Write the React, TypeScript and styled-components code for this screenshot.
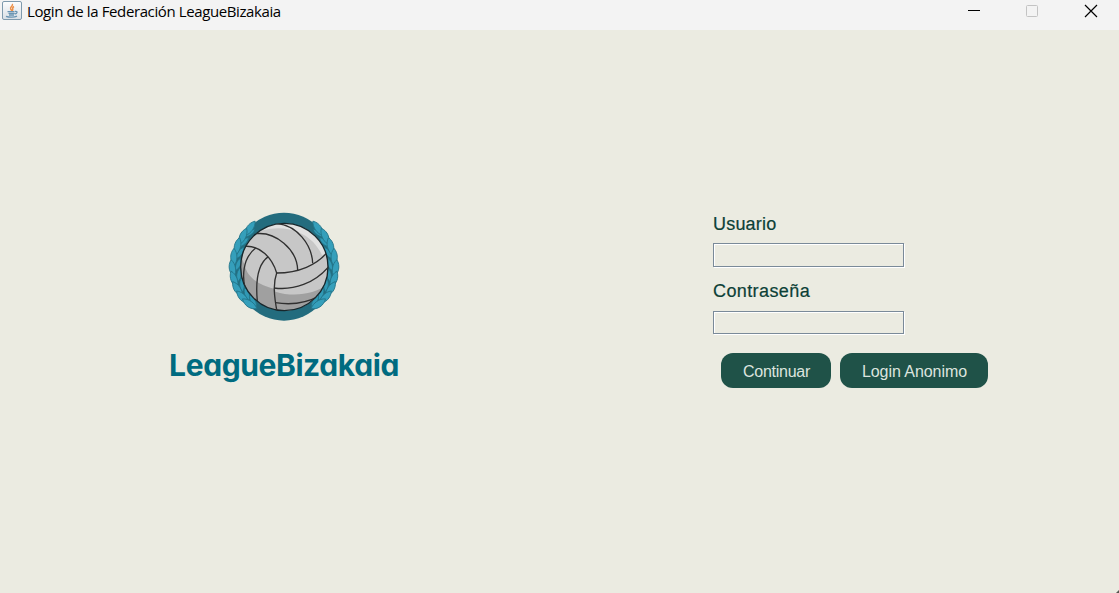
import React from "react";
import styled, { createGlobalStyle } from "styled-components";

const GlobalStyle = createGlobalStyle`
  * { box-sizing: border-box; }
  body { margin: 0; background: #ebebe1; overflow: hidden; }
`;

const Window = styled.div`
  width: 1119px;
  height: 593px;
  display: flex;
  flex-direction: column;
  background: #ebebe1;
  font-family: "Liberation Sans", Arial, sans-serif;
`;

const TitleBar = styled.header`
  height: 30px;
  flex: none;
  display: flex;
  align-items: flex-start;
  justify-content: space-between;
  background: #f3f3f3;
`;

const TitleGroup = styled.div`
  display: flex;
  padding-left: 2px;
  gap: 5px;
`;

const TitleText = styled.span`
  font: 15px/22px "Open Sans", "Noto Sans", sans-serif;
  letter-spacing: -0.39px;
  color: #000;
  white-space: nowrap;
`;

const WindowControls = styled.div`
  display: flex;
  gap: 38px;
  padding-right: 18px;
`;

const ControlButton = styled.button`
  border: 0;
  padding: 0;
  background: none;
  width: 20px;
  height: 22px;
  display: block;
`;

const Content = styled.main`
  flex: 1;
  display: grid;
  grid-template-columns: 568px 1fr;
`;

const Brand = styled.section`
  display: flex;
  flex-direction: column;
  align-items: center;
  padding-top: 175px;
`;

const BrandName = styled.h1`
  margin: 16px 0 0;
  font: 700 30px/40px Inter, sans-serif;
  font-feature-settings: "cv11" 1;
  letter-spacing: -0.4px;
  color: #006b80;
  white-space: nowrap;
`;

const LoginForm = styled.form`
  display: flex;
  flex-direction: column;
  align-items: flex-start;
  padding: 182px 0 0 145px;
`;

const Label = styled.label<{ $spacing: string }>`
  font-size: 18px;
  line-height: 24px;
  letter-spacing: ${(p) => p.$spacing};
  color: #0b4036;
  -webkit-text-stroke: 0.2px #0b4036;
`;

const Field = styled.input<{ $height: number; $before: number; $after: number }>`
  width: 191px;
  height: ${(p) => p.$height}px;
  margin: ${(p) => p.$before}px 0 ${(p) => p.$after}px;
  padding: 0 4px;
  border: 1px solid #7a8a99;
  border-radius: 0;
  background: transparent;
  box-shadow: 1px 1px 0 #fff, inset 1px 1px 0 #fff;
  outline: none;
`;

const Actions = styled.div`
  display: flex;
  gap: 9px;
  padding-left: 8px;
`;

const ActionButton = styled.button<{ $width: number; $spacing: string }>`
  width: ${(p) => p.$width}px;
  height: 35px;
  padding: 2px 0 0 1px;
  border: 0;
  border-radius: 12px;
  background: #1f5248;
  color: #dce4df;
  font: 16px/20px "Liberation Sans", Arial, sans-serif;
  letter-spacing: ${(p) => p.$spacing};
  white-space: nowrap;
`;

const LEAVES = [
  [89, 70, 35], [68, 94, 24], [52, 124, 12], [41, 157, 0], [37, 191, -10],
  [42, 224, -21], [52, 253, -33], [68, 278, -44], [89, 298, -55],
];

const INNER_LEAVES = [
  [87, 85, 58], [70, 112, 48], [60, 144, 34], [55, 178, 22],
  [57, 210, 8], [66, 240, -5], [81, 268, -20], [99, 288, -30],
];

function Laurel() {
  return (
    <g stroke="#237488" strokeWidth="2.5" strokeLinejoin="round">
      {INNER_LEAVES.map(([x, y, a]) => (
        <path key={`i${y}`} fill="#3199b5" transform={`translate(${x} ${y}) rotate(${a})`}
          d="M0 -21C9 -9 9 8 0 20C-9 9 -9 -9 0 -21Z" />
      ))}
      {LEAVES.map(([x, y, a]) => (
        <path key={`o${y}`} fill="#359fbb" transform={`translate(${x} ${y}) rotate(${a})`}
          d="M1 -27C13 -12 12 10 2 25C-12 12 -13 -11 1 -27Z" />
      ))}
    </g>
  );
}

function LeagueLogo() {
  return (
    <svg width="128" height="124" viewBox="0 0 384 372" aria-label="Volleyball">
      <defs>
        <clipPath id="ball"><circle cx="193" cy="186" r="131" /></clipPath>
      </defs>
      <ellipse cx="192" cy="185" rx="151" ry="162" fill="#236c7e" />
      <Laurel />
      <g transform="translate(384 0) scale(-1 1)"><Laurel /></g>
      <circle cx="193" cy="186" r="131" fill="#c7c7c7" />
      <g clipPath="url(#ball)">
        <path fill="#e1e1e1" d="M128 76C185 60 245 74 280 112C292 126 302 140 306 151L334 132L260 50L160 46Z" />
        <path fill="#a0a0a0" d="M58 140L75 184C83 219 120 242 164 252C220 278 280 265 326 230L300 326H120L55 250Z" />
        <path fill="#c7c7c7" d="M170 203C240 203 294 177 325 137L328 187C286 232 218 261 163 247Z" />
        <path fill="#c7c7c7" d="M165 250C222 260 270 240 324 205V238C280 270 218 276 166 260Z" />
      </g>
      <circle cx="193" cy="186" r="131" fill="none" stroke="#17262b" strokeWidth="4" />
      <g clipPath="url(#ball)" fill="none" stroke="#303030" strokeWidth="4">
        <path d="M74 124C120 120 157 159 170 204C158 238 163 276 171 320" />
        <path d="M109 86C166 80 231 132 233 195" />
        <path d="M170 55C231 61 276 119 278 175" />
        <path d="M170 204C235 204 292 180 324 139" />
        <path d="M162 249C222 257 284 234 326 185" />
        <path d="M166 293C220 302 260 294 300 272" />
        <path d="M107 129C65 162 68 219 75 247" />
        <path d="M145 155C111 179 107 236 112 289" />
      </g>
    </svg>
  );
}

function JavaIcon() {
  return (
    <svg width="20" height="22" viewBox="0 0 20 22">
      <defs>
        <linearGradient id="tile" x1="0" y1="0" x2="0" y2="1">
          <stop offset="0" stopColor="#fdfdfd" /><stop offset="1" stopColor="#d9dfe5" />
        </linearGradient>
      </defs>
      <rect x=".5" y="1.5" width="19" height="18" rx="1.5" fill="url(#tile)" stroke="#7f9aad" />
      <path d="M10.3 4C11.5 6 7.5 7 8.7 9L10 11M12 6.5C9 8 12 9 10.2 11" fill="none" stroke="#ed8e45" strokeWidth="1.5" />
      <path d="M5.5 11.7H12.5M6.5 13.4H12.5M7 15H12M4 16.3C7 17.5 12.5 17.5 15 16.1M13 11.5C16 10.8 15.5 13.5 12.7 14" fill="none" stroke="#6a94b2" strokeWidth="1.3" />
    </svg>
  );
}

const CornerMark = styled.i`
  position: absolute;
  left: 1116px;
  top: 590px;
  width: 3px;
  height: 3px;
  background: #55564f;
  clip-path: polygon(100% 0, 100% 100%, 0 100%);
`;

export default function App() {
  return (
    <Window>
      <GlobalStyle />
      <TitleBar>
        <TitleGroup>
          <JavaIcon />
          <TitleText>Login de la Federación LeagueBizakaia</TitleText>
        </TitleGroup>
        <WindowControls>
          <ControlButton type="button" aria-label="Minimizar">
            <svg width="20" height="22"><path d="M3 10.5H15" stroke="#000" /></svg>
          </ControlButton>
          <ControlButton type="button" aria-label="Maximizar" disabled>
            <svg width="20" height="22"><rect x="3.5" y="5.5" width="11" height="11" rx="1" fill="none" stroke="#c3c3c3" /></svg>
          </ControlButton>
          <ControlButton type="button" aria-label="Cerrar">
            <svg width="20" height="22"><path d="M4 5L16 17M16 5L4 17" stroke="#000" strokeWidth="1.2" /></svg>
          </ControlButton>
        </WindowControls>
      </TitleBar>
      <Content>
        <Brand>
          <LeagueLogo />
          <BrandName>LeagueBizakaia</BrandName>
        </Brand>
        <LoginForm>
          <Label htmlFor="user" $spacing="0.2px">Usuario</Label>
          <Field id="user" $height={24} $before={7} $after={12} />
          <Label htmlFor="password" $spacing="0.4px">Contraseña</Label>
          <Field id="password" type="password" $height={23} $before={8} $after={19} />
          <Actions>
            <ActionButton type="button" $width={110} $spacing="-0.25px">Continuar</ActionButton>
            <ActionButton type="button" $width={148} $spacing="-0.05px">Login Anonimo</ActionButton>
          </Actions>
        </LoginForm>
      </Content>
      <CornerMark />
    </Window>
  );
}
